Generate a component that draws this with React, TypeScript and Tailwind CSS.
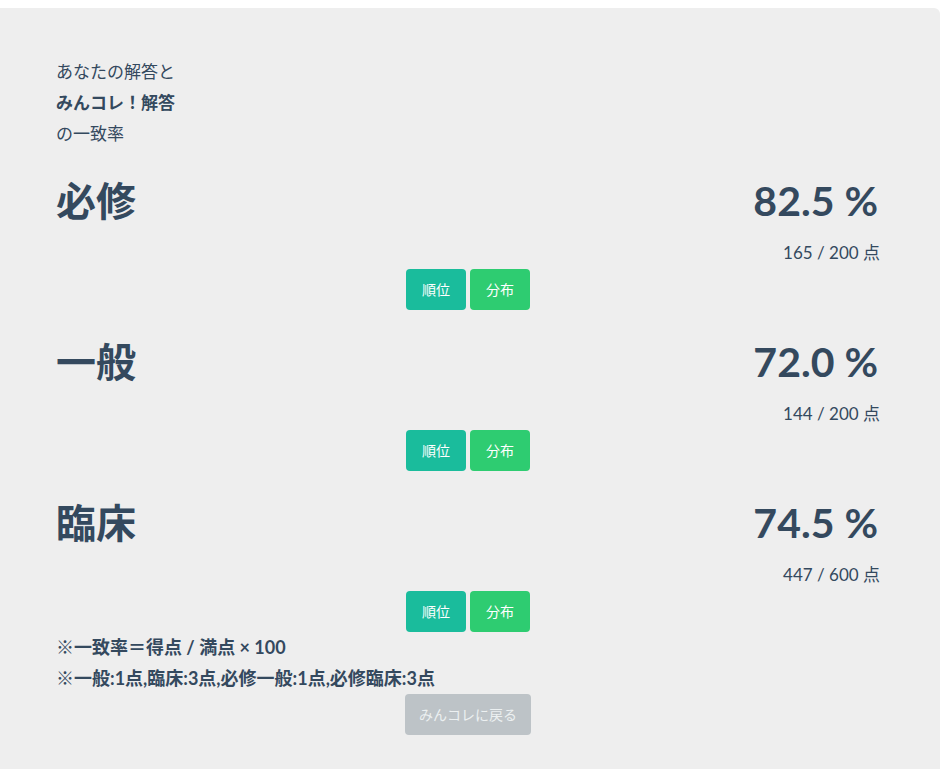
const sections = [
  { name: "必修", rate: "82.5", score: "165", total: "200" },
  { name: "一般", rate: "72.0", score: "144", total: "200" },
  { name: "臨床", rate: "74.5", score: "447", total: "600" },
];

function Btn({ label, color }: { label: string; color: string }) {
  return (
    <button className={`h-[41px] rounded-[4px] px-4 text-[14px] text-white ${color}`}>{label}</button>
  );
}

export default function App() {
  return (
    <div className="min-h-screen bg-white pt-2 pr-1 font-['Lato','Noto_Sans_CJK_JP',sans-serif] text-[#34495e]">
      <div className="rounded-tr-md bg-[#eeeeee] pt-[48px] pb-10 pl-14 pr-[60px]">
        <div className="text-[17px] leading-[31px]">
          <p>あなたの解答と</p>
          <p className="font-bold">みんコレ！解答</p>
          <p>の一致率</p>
        </div>

        {sections.map((s) => (
          <div key={s.name} className="mt-[30px]">
            <div className="flex items-center justify-between text-[40px] font-bold leading-[44px]">
              <h2>{s.name}</h2>
              <span className="pr-[2px] text-[41px]">{s.rate} %</span>
            </div>
            <p className="mt-[18px] text-right text-[17px] leading-[24px]">
              {s.score} / {s.total} 点
            </p>
            <div className="mt-1 flex justify-center gap-1">
              <Btn label="順位" color="bg-[#1abc9c]" />
              <Btn label="分布" color="bg-[#2ecc71]" />
            </div>
          </div>
        ))}

        <div className="text-[18px] font-bold leading-[31px]">
          <p>※一致率＝得点 / 満点 × 100</p>
          <p>※一般:1点,臨床:3点,必修一般:1点,必修臨床:3点</p>
        </div>
        <div className="flex justify-center">
          <button className="h-[41px] rounded-[4px] bg-[#bdc3c7] px-[14px] text-[14px] text-[#ecf0f1]">
            みんコレに戻る
          </button>
        </div>
      </div>
    </div>
  );
}
